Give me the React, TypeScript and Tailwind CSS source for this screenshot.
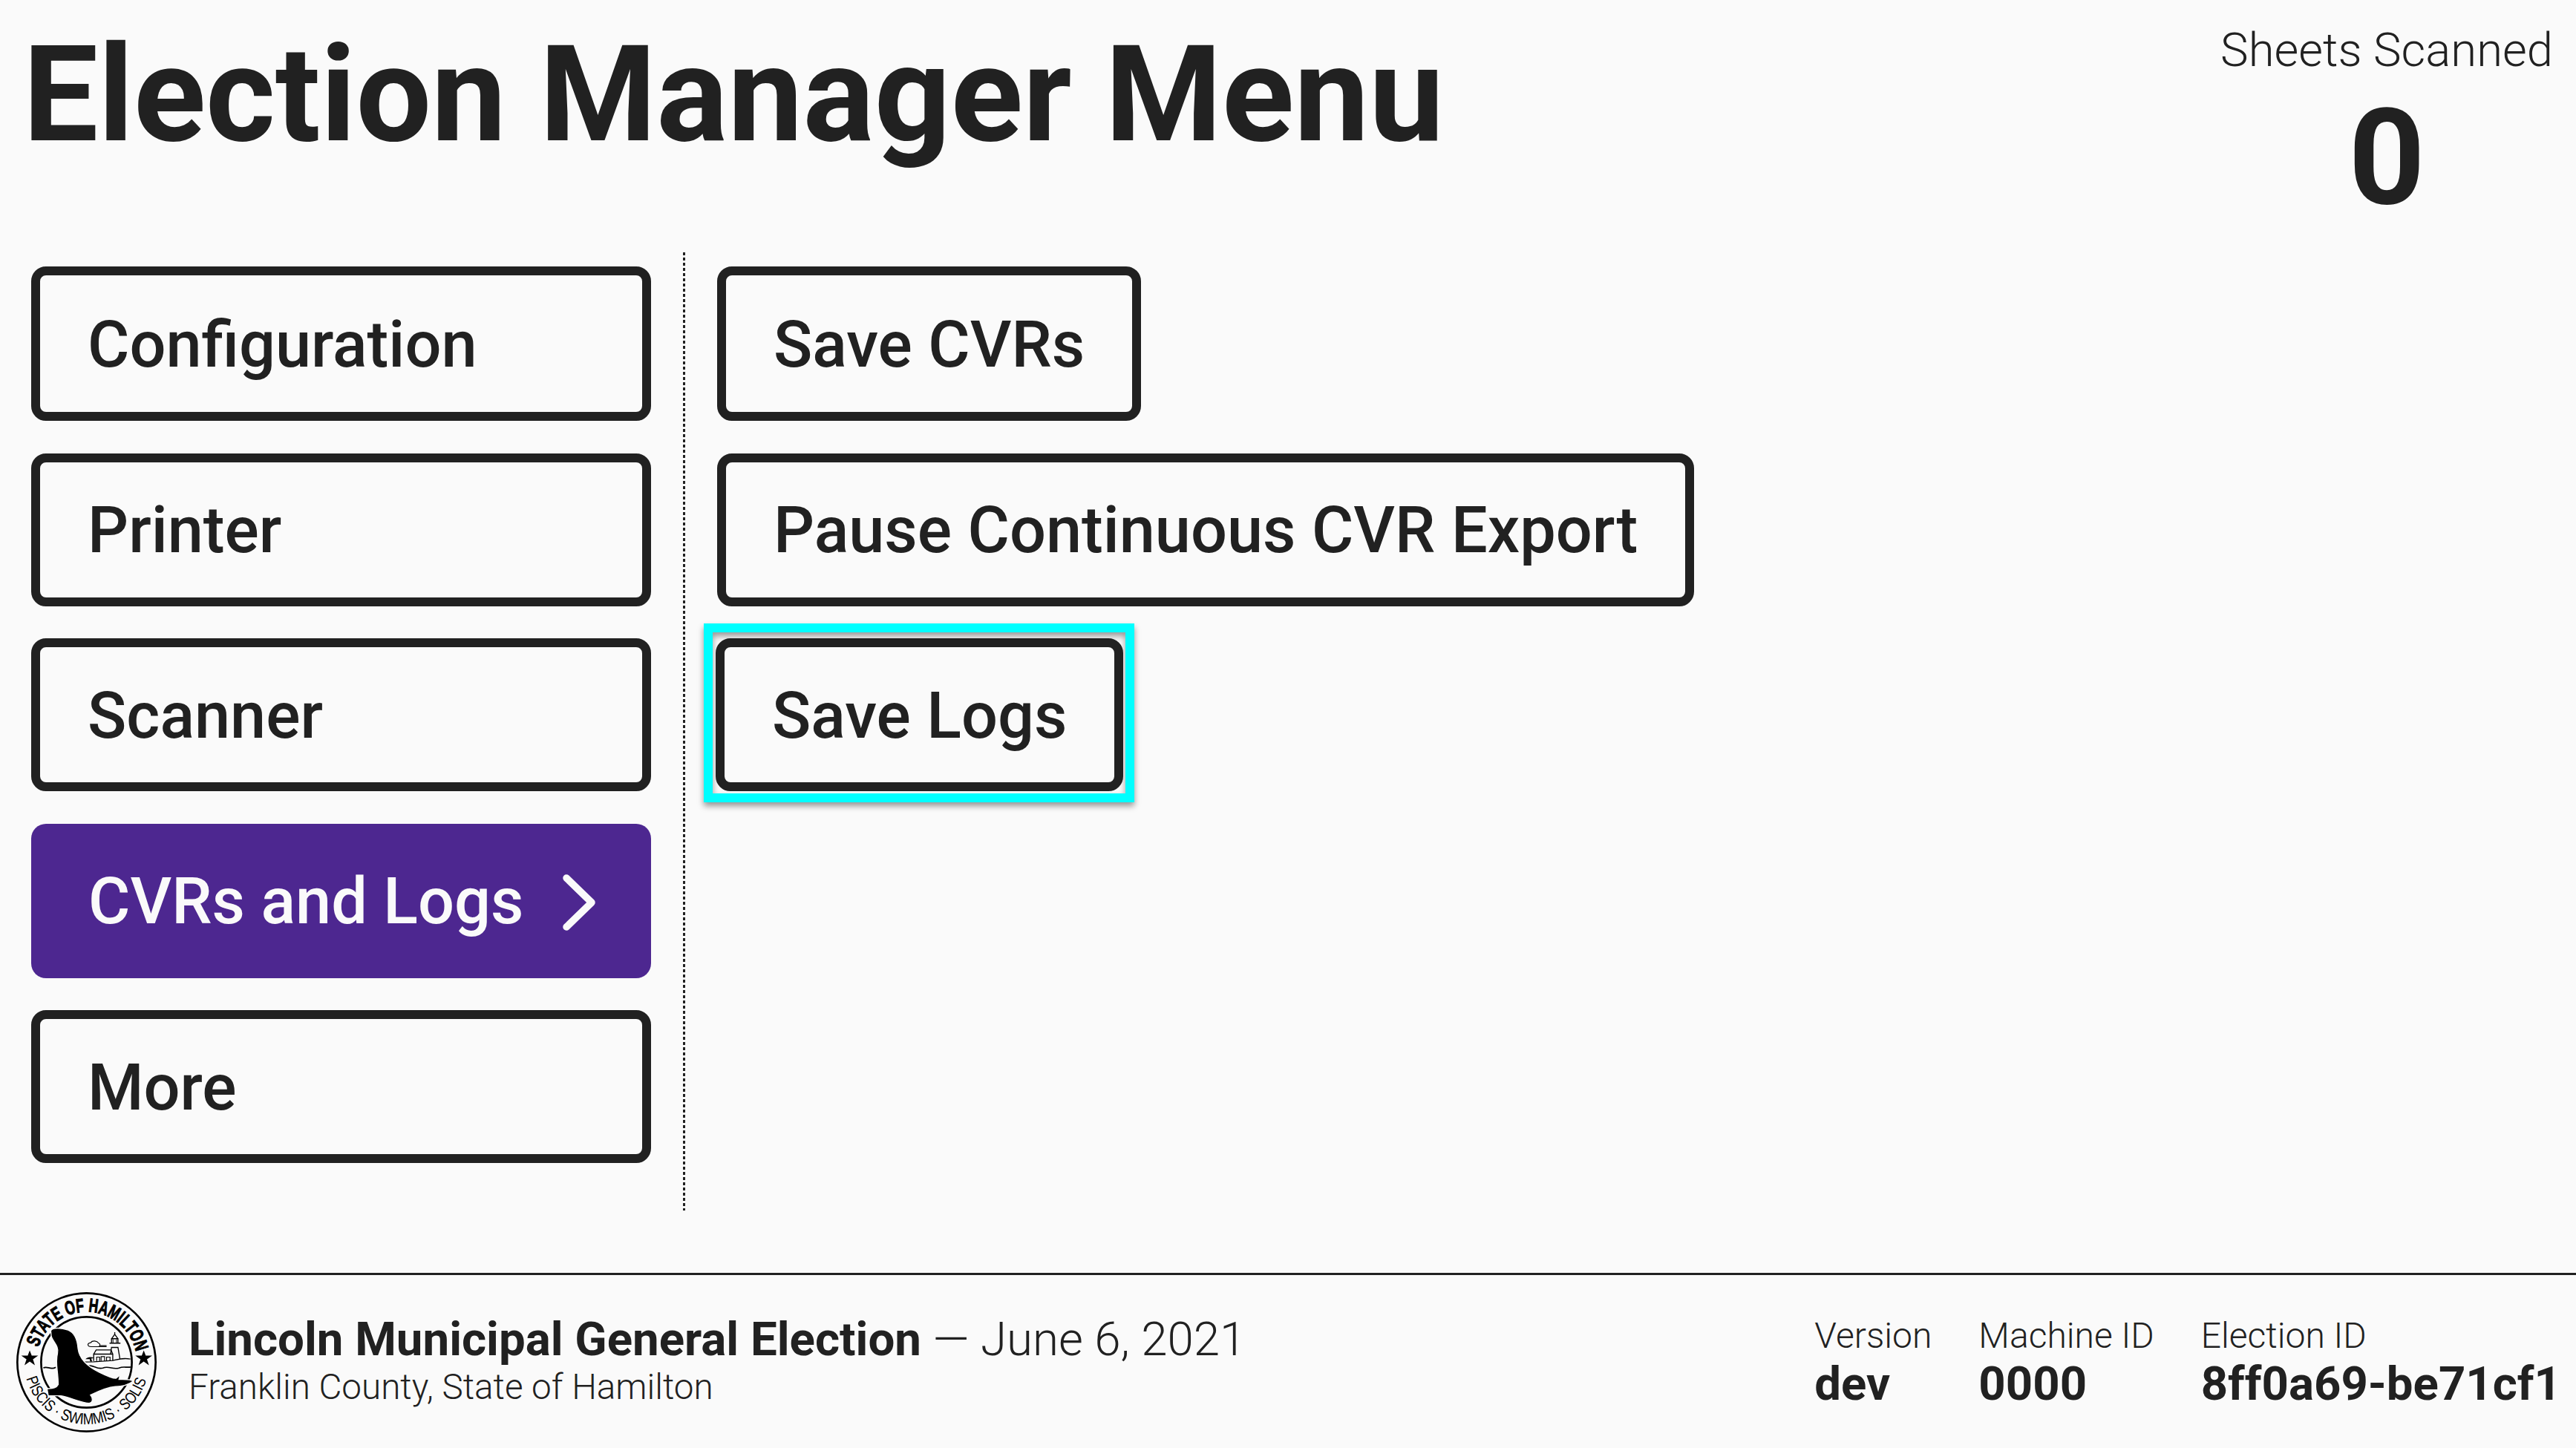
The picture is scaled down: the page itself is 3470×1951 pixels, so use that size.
import React from 'react';

const menuButton =
  'rounded-[20px] border-[12.5px] border-[#212121] bg-[#fafafa] px-[64px] pt-[4px] text-left text-[86.4px] leading-none font-medium text-[#212121]';

const Seal: React.FC = () => (
  <svg viewBox="66 122 566 566" className="h-[189px] w-[189px] shrink-0 translate-y-[4px]">
    <defs>
      <path id="sealTop" d="M155 345 A203 203 0 0 1 543 345" />
      <path id="sealBottom" d="M106 470 A252 252 0 0 0 592 470" />
    </defs>
    <circle cx="349" cy="405" r="279" fill="none" stroke="#000" strokeWidth="8" />
    <circle cx="349" cy="405" r="183" fill="none" stroke="#000" strokeWidth="8" />
    <text fontFamily="'Liberation Sans Narrow','Liberation Sans',sans-serif" fontWeight="700" fontSize="78" fill="#000" stroke="#000" strokeWidth="3">
      <textPath href="#sealTop" textLength="535" lengthAdjust="spacingAndGlyphs">STATE OF HAMILTON</textPath>
    </text>
    <text fontFamily="'Liberation Sans Narrow','Liberation Sans',sans-serif" fontSize="64" fill="#000">
      <textPath href="#sealBottom" textLength="650" lengthAdjust="spacingAndGlyphs">PISCIS · SWIMMIS · SOLIS</textPath>
    </text>
    <polygon points="120,357 128,378 154,378 133,393 141,417 120,402 99,417 107,393 86,378 112,378" fill="#000" />
    <polygon points="580,357 588,378 614,378 593,393 601,417 580,402 559,417 567,393 546,378 572,378" fill="#000" />
    {/* sea */}
    <path d="M175 428 C190 418 205 438 225 425" fill="none" stroke="#000" strokeWidth="5" />
    <path d="M355 420 C375 412 390 436 415 428 C440 418 455 436 480 428 C500 420 510 428 527 424" fill="none" stroke="#000" strokeWidth="5" />
    {/* shore */}
    <path d="M337 404 L378 403 L455 398 C480 392 500 386 526 392" fill="none" stroke="#000" strokeWidth="4" />
    {/* house */}
    <path d="M378 400 L378 372 L455 372 L455 398 M378 372 L388 355 L448 355 L455 372" fill="none" stroke="#000" strokeWidth="4" />
    <path d="M390 400 V384 H402 V400 M408 400 V382 H422 V400 M430 400 V384 H444 V400" fill="none" stroke="#000" strokeWidth="3.5" />
    {/* lighthouse */}
    <path d="M450 345 L446 372 M476 345 L484 392 M442 328 H486 M448 345 H478 M450 328 V310 H476 V328 M450 310 L463 292 L476 310 M463 292 V284" fill="none" stroke="#000" strokeWidth="4" />
    <path d="M456 312 V326 M470 312 V326" fill="none" stroke="#000" strokeWidth="3" />
    {/* cloud */}
    <path d="M430 342 H368 C352 342 350 328 366 326 C372 316 392 318 398 328 C404 330 404 336 402 338 L430 338" fill="none" stroke="#000" strokeWidth="3.5" />
    {/* tree */}
    <path d="M345 392 C355 382 368 382 380 388 L368 390 L372 402 L364 402 L362 392 Z" fill="#000" />
    {/* seal */}
    <path
      d="M205 278 C212 262 250 266 275 275 C300 285 312 310 315 350 C320 392 350 420 400 445 C430 460 452 470 468 470 L485 456 L480 474 C500 474 525 472 538 481 C520 495 495 503 465 503 C440 505 400 520 365 537 C376 550 376 566 360 570 C330 570 280 545 245 540 L195 540 L190 512 C210 510 228 510 235 495 C235 440 222 410 232 370 C240 340 212 320 207 300 Z"
      fill="#000"
      stroke="#fafafa"
      strokeWidth="4"
    />
  </svg>
);

const Meta: React.FC<{ label: string; value: string }> = ({ label, value }) => (
  <div className="flex flex-col">
    <span className="text-[48px] leading-[60px] font-light">{label}</span>
    <span className="text-[63.5px] leading-[70px] font-bold">{value}</span>
  </div>
);

const App: React.FC = () => {
  return (
    <div className="flex h-[1951px] w-[3470px] flex-col overflow-hidden bg-[#fafafa] font-[Roboto,sans-serif] text-[#212121]">
      <header className="flex h-[340px] shrink-0 items-start justify-between pl-[31px] pr-[31px]">
        <h1 className="pt-[38px] text-[180px] leading-none font-bold">Election Manager Menu</h1>
        <div className="flex flex-col items-center pt-[30px]">
          <span className="text-[63.4px] leading-[75px] font-light">Sheets Scanned</span>
          <span className="pt-[18px] text-[180px] leading-none font-bold">0</span>
        </div>
      </header>

      <main className="flex flex-1 items-start pl-[42px]">
        <div className="flex w-[835px] shrink-0 flex-col gap-[43.5px] pt-[19px]">
          <button className={`h-[208px] ${menuButton}`}>Configuration</button>
          <button className={`h-[206px] ${menuButton}`}>Printer</button>
          <button className={`h-[206px] ${menuButton}`}>Scanner</button>
          <button className="flex h-[208px] items-center gap-[53px] rounded-[20px] bg-[#4d2790] pl-[77px] pt-[4px] text-[86.4px] leading-none font-medium text-[#fafafa]">
            CVRs and Logs
            <svg viewBox="0 0 44 76" className="h-[76px] w-[44px]">
              <polyline points="5,5 39,38 5,71" fill="none" stroke="#fafafa" strokeWidth="9.5" strokeLinecap="round" strokeLinejoin="round" />
            </svg>
          </button>
          <button className={`h-[206px] ${menuButton}`}>More</button>
        </div>

        <div className="ml-[43px] h-[1291px] w-[3px] bg-[repeating-linear-gradient(to_bottom,#212121_0,#212121_4px,transparent_4px,transparent_7px)]" />

        <div className="ml-[43px] flex flex-col items-start gap-[43.5px] pt-[19px]">
          <button className={`h-[208px] ${menuButton}`}>Save CVRs</button>
          <button className={`h-[206px] ${menuButton}`}>Pause Continuous CVR Export</button>
          <div className="-mt-[20px] -ml-[18px] border-[12px] border-[#00ffff] pt-[8px] pr-[3px] pb-[3px] pl-[4px] shadow-[0_5px_8px_rgba(0,0,0,0.4),inset_0_5px_8px_rgba(0,0,0,0.4)]">
            <button className={`h-[206px] ${menuButton}`}>Save Logs</button>
          </div>
        </div>
      </main>

      <footer className="flex h-[236px] shrink-0 items-center justify-between border-t-[3.6px] border-[#212121] pl-[22px] pr-[20px]">
        <div className="flex -translate-y-[3px] items-center gap-[43px]">
          <Seal />
          <div className="flex flex-col">
            <div className="text-[63.6px] leading-[74px] font-light">
              <span className="font-bold">Lincoln Municipal General Election</span> — June 6, 2021
            </div>
            <div className="text-[47.6px] leading-[54px] font-light">Franklin County, State of Hamilton</div>
          </div>
        </div>
        <div className="flex gap-[63px]">
          <Meta label="Version" value="dev" />
          <Meta label="Machine ID" value="0000" />
          <Meta label="Election ID" value="8ff0a69-be71cf1" />
        </div>
      </footer>
    </div>
  );
};

export default App;
